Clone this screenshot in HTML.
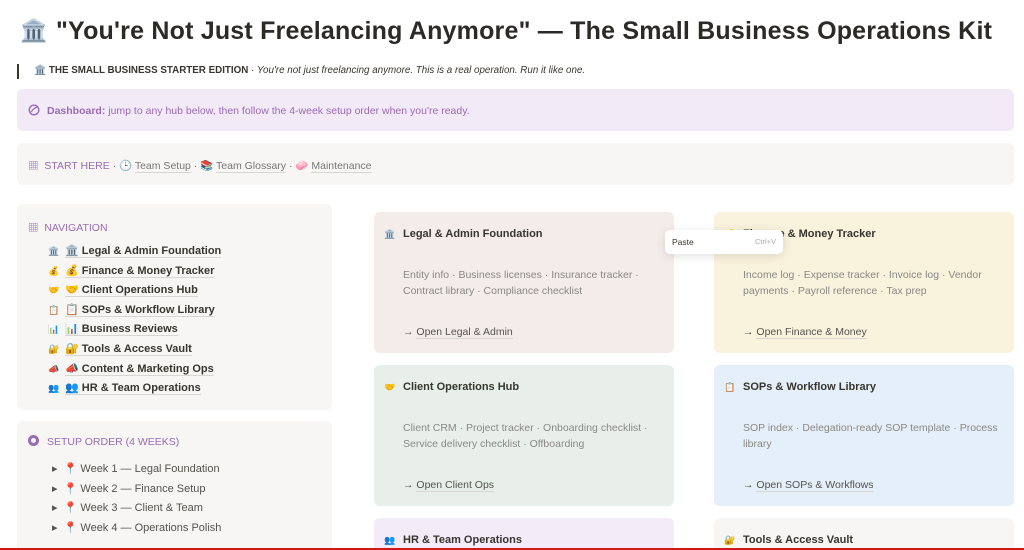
<!DOCTYPE html>
<html><head><meta charset="utf-8"><style>
*{margin:0;padding:0;box-sizing:border-box}
html,body{width:1024px;height:550px;overflow:hidden}
body{background:#fff;font-family:"Liberation Sans","Noto Sans CJK JP",sans-serif;color:#37352f;position:relative}
.a{position:absolute}
.box{position:absolute;border-radius:6px}
.u{border-bottom:1px solid #d8d6d2}
.nav div{height:19.6px;font-size:11px;font-weight:600;color:#37352f}
.nav span.e{display:inline-block;width:17px;font-size:9px}
.wk div{height:19.6px;font-size:11px;color:#55534e}
.card{position:absolute;border-radius:6px;width:300px;height:141px}
.card h3{position:absolute;left:10px;top:16px;font-size:11px;font-weight:600;color:#37352f}
.card h3 i{font-style:normal;display:inline-block;width:19px;font-size:9px}
.card p{position:absolute;left:29px;top:55px;width:250px;font-size:10.5px;line-height:16px;color:#8a8884}
.card .l{position:absolute;left:29px;top:114px;font-size:10.5px;color:#55534e}
</style></head><body>
<div class="a" style="left:20px;top:18px;font-size:22px">🏛️</div>
<div class="a" style="left:56px;top:17px;font-size:25px;font-weight:700;color:#2b2a27;letter-spacing:0.2px;white-space:nowrap">"You're Not Just Freelancing Anymore" — The Small Business Operations Kit</div>
<div class="a" style="left:17px;top:64px;width:2px;height:15px;background:#37352f"></div>
<div class="a" style="left:34px;top:65px;font-size:9.8px;color:#37352f;white-space:nowrap">🏛️ <b style="font-weight:600">THE SMALL BUSINESS STARTER EDITION</b> · <i>You're not just freelancing anymore. This is a real operation. Run it like one.</i></div>
<div class="box" style="left:17px;top:89px;width:997px;height:42px;background:#f3eaf8"></div>
<svg class="a" style="left:28px;top:104px" width="12" height="12" viewBox="0 0 12 12"><circle cx="6" cy="6" r="4.8" fill="none" stroke="#9a6bb5" stroke-width="1.4"/><path d="M3 8 Q6 4 9 3" fill="none" stroke="#9a6bb5" stroke-width="1.2"/></svg>
<div class="a" style="left:47px;top:105px;font-size:10.5px;color:#9a6bb5"><b>Dashboard:</b> jump to any hub below, then follow the 4-week setup order when you're ready.</div>
<div class="box" style="left:17px;top:143px;width:997px;height:42px;background:#f7f6f4"></div>
<div class="a" style="left:28px;top:158px;font-size:10.5px;color:#9a6bb5;white-space:nowrap">▦ &nbsp;<span>START HERE</span><span style="color:#777"> · 🕒 <span class="u">Team Setup</span> · 📚 <span class="u">Team Glossary</span> · 🧼 <span class="u">Maintenance</span></span></div>

<div class="box" style="left:17px;top:204px;width:315px;height:206px;background:#f7f6f4"></div>
<div class="a" style="left:28px;top:220px;font-size:10.5px;color:#9a6bb5">▦ &nbsp;NAVIGATION</div>
<div class="a nav" style="left:48px;top:244px">
<div><span class="e">🏛️</span><span class="u">🏛️ Legal &amp; Admin Foundation</span></div>
<div><span class="e">💰</span><span class="u">💰 Finance &amp; Money Tracker</span></div>
<div><span class="e">🤝</span><span class="u">🤝 Client Operations Hub</span></div>
<div><span class="e">📋</span><span class="u">📋 SOPs &amp; Workflow Library</span></div>
<div><span class="e">📊</span><span class="u">📊 Business Reviews</span></div>
<div><span class="e">🔐</span><span class="u">🔐 Tools &amp; Access Vault</span></div>
<div><span class="e">📣</span><span class="u">📣 Content &amp; Marketing Ops</span></div>
<div><span class="e">👥</span><span class="u">👥 HR &amp; Team Operations</span></div>
</div>
<div class="box" style="left:17px;top:421px;width:315px;height:127px;background:#f7f6f4;border-radius:6px 6px 0 0"></div>
<div class="a" style="left:28px;top:435px;width:11px;height:11px;border-radius:50%;border:3px solid #9a6bb5"></div>
<div class="a" style="left:47px;top:436px;font-size:10.5px;color:#9a6bb5">SETUP ORDER (4 WEEKS)</div>
<div class="a wk" style="left:52px;top:462px">
<div>▸ &nbsp;📍 Week 1 — Legal Foundation</div>
<div>▸ &nbsp;📍 Week 2 — Finance Setup</div>
<div>▸ &nbsp;📍 Week 3 — Client &amp; Team</div>
<div>▸ &nbsp;📍 Week 4 — Operations Polish</div>
</div>

<div class="card" style="left:374px;top:212px;background:#f4ece9"><h3><i>🏛️</i>Legal &amp; Admin Foundation</h3><p>Entity info · Business licenses · Insurance tracker · Contract library · Compliance checklist</p><div class="l">→ <span class="u">Open Legal &amp; Admin</span></div></div>
<div class="card" style="left:714px;top:212px;background:#f9f2dc"><h3><i>💰</i>Finance &amp; Money Tracker</h3><p>Income log · Expense tracker · Invoice log · Vendor payments · Payroll reference · Tax prep</p><div class="l">→ <span class="u">Open Finance &amp; Money</span></div></div>
<div class="card" style="left:374px;top:365px;background:#e8efea"><h3><i>🤝</i>Client Operations Hub</h3><p>Client CRM · Project tracker · Onboarding checklist · Service delivery checklist · Offboarding</p><div class="l">→ <span class="u">Open Client Ops</span></div></div>
<div class="card" style="left:714px;top:365px;background:#e5eff9"><h3><i>📋</i>SOPs &amp; Workflow Library</h3><p style="width:262px">SOP index · Delegation-ready SOP template · Process library</p><div class="l">→ <span class="u">Open SOPs &amp; Workflows</span></div></div>
<div class="card" style="left:374px;top:518px;height:30px;border-radius:6px 6px 0 0;background:#f3ebf7"><h3><i>👥</i>HR &amp; Team Operations</h3></div>
<div class="card" style="left:714px;top:518px;height:30px;border-radius:6px 6px 0 0;background:#f7f6f4"><h3><i>🔐</i>Tools &amp; Access Vault</h3></div>

<div class="a" style="left:665px;top:230px;width:118px;height:24px;background:#fff;border-radius:5px;box-shadow:0 2px 10px rgba(0,0,0,.12)"><span class="a" style="left:7px;top:7px;font-size:8.5px;color:#37352f">Paste</span><span class="a" style="right:7px;top:7px;font-size:7.5px;color:#aaa">Ctrl+V</span></div>
<div class="a" style="left:0;top:548px;width:1024px;height:2px;background:#d01818"></div>
</body></html>
